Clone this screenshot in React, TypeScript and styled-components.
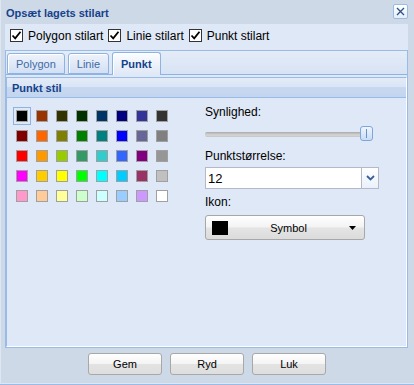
import { useState } from 'react';
import styled, { createGlobalStyle } from 'styled-components';

const GlobalStyle = createGlobalStyle`
  html, body {
    margin: 0;
    padding: 0;
    background: #ffffff;
  }
  body {
    font-family: "Liberation Sans", Arial, sans-serif;
  }
`;

const PALETTE = [
  ['000000', '993300', '333300', '003300', '003366', '000080', '333399', '333333'],
  ['800000', 'FF6600', '808000', '008000', '008080', '0000FF', '666699', '808080'],
  ['FF0000', 'FF9900', '99CC00', '339966', '33CCCC', '3366FF', '800080', '969696'],
  ['FF00FF', 'FFCC00', 'FFFF00', '00FF00', '00FFFF', '00CCFF', '993366', 'C0C0C0'],
  ['FF99CC', 'FFCC99', 'FFFF99', 'CCFFCC', 'CCFFFF', '99CCFF', 'CC99FF', 'FFFFFF'],
];

const TABS = ['Polygon', 'Linie', 'Punkt'];

const Window = styled.div`
  width: 414px;
  height: 385px;
  box-sizing: border-box;
  display: flex;
  flex-direction: column;
  background: #ced9e7;
  border-bottom: 1px solid #99bbe8;
  box-shadow: inset 1px 0 0 #dde6f2, inset 0 -1px 0 #dde6f2;
`;

const Header = styled.div`
  height: 24px;
  flex: none;
  display: flex;
  align-items: center;
  justify-content: space-between;
  padding: 0 6px 0 6px;
`;

const Title = styled.span`
  font-size: 11px;
  font-weight: bold;
  color: #15428b;
  margin-top: 1px;
`;

const CloseButton = styled.div`
  width: 15px;
  height: 15px;
  box-sizing: border-box;
  border: 1px solid #99bbe8;
  border-radius: 2px;
  background: linear-gradient(#ffffff, #e6eefa);
  display: flex;
  align-items: center;
  justify-content: center;
  margin-top: -2px;
`;

const Body = styled.div`
  margin: 0 6px 0 5px;
  background: #dfe8f6;
  display: flex;
  flex-direction: column;
`;

const CheckRow = styled.div`
  height: 26px;
  display: flex;
  align-items: center;
  padding: 0 0 3px 5px;
  box-sizing: border-box;
`;

const CheckItem = styled.label`
  display: flex;
  align-items: center;
  margin-right: 5px;
  font-size: 12px;
  color: #000;
`;

const CheckBox = styled.span`
  width: 13px;
  height: 13px;
  box-sizing: border-box;
  border: 1px solid #333;
  background: #fff;
  margin-right: 5px;
  display: flex;
  align-items: center;
  justify-content: center;
`;

const TabPanel = styled.div`
  height: 298px;
  box-sizing: border-box;
  border: 1px solid #99bbe8;
  display: flex;
  flex-direction: column;
`;

const TabStrip = styled.div`
  height: 24px;
  box-sizing: border-box;
  flex: none;
  display: flex;
  align-items: flex-end;
  gap: 3px;
  padding-left: 1px;
  background: linear-gradient(#e4ecf7, #d7e3f4);
  border-bottom: 1px solid #8db2e3;
`;

const Tab = styled.div<{ $active?: boolean }>`
  height: ${(p) => (p.$active ? '23px' : '21px')};
  margin-bottom: ${(p) => (p.$active ? '-1px' : '0')};
  box-sizing: border-box;
  padding: 0 8px;
  display: flex;
  align-items: center;
  border: 1px solid #8db2e3;
  border-bottom: ${(p) => (p.$active ? 'none' : '1px solid #8db2e3')};
  border-radius: 3px 3px 0 0;
  font-size: 11px;
  font-weight: ${(p) => (p.$active ? 'bold' : 'normal')};
  color: ${(p) => (p.$active ? '#15428b' : '#416aa3')};
  background: ${(p) =>
    p.$active ? 'linear-gradient(#fbfdff, #dfe8f6)' : 'linear-gradient(#eef3fb, #d2e0f4)'};
  box-shadow: inset 1px 1px 0 #ffffff;
  cursor: pointer;
`;

const TabBody = styled.div`
  flex: 1;
  padding-top: 2px;
  display: flex;
  flex-direction: column;
`;

const InnerPanel = styled.div`
  flex: 1;
  display: flex;
  flex-direction: column;
  border: 1px solid #99bbe8;
  border-right-color: #ffffff;
  border-bottom-color: #ffffff;
`;

const PanelHeader = styled.div`
  height: 20px;
  flex: none;
  box-sizing: border-box;
  display: flex;
  align-items: center;
  padding-left: 5px;
  font-size: 11px;
  font-weight: bold;
  color: #15428b;
  background: linear-gradient(#e3ebf7 0%, #dae5f5 45%, #c8d8f0 50%, #c3d5ef 100%);
  border-bottom: 1px solid #99bbe8;
`;

const PanelContent = styled.div`
  flex: 1;
  display: flex;
  gap: 34px;
  padding: 9px 0 0 6px;
`;

const Palette = styled.div`
  display: grid;
  grid-template-columns: repeat(8, 18px);
  grid-auto-rows: 18px;
  gap: 2px;
  align-self: flex-start;
`;

const Cell = styled.div<{ $selected?: boolean }>`
  box-sizing: border-box;
  padding: 2px;
  border: 1px solid ${(p) => (p.$selected ? '#8db2e3' : 'transparent')};
  cursor: pointer;
`;

const Swatch = styled.div`
  width: 12px;
  height: 12px;
  box-sizing: border-box;
  border: 1px solid #a0a0a0;
`;

const Column = styled.div`
  display: flex;
  flex-direction: column;
  margin-top: -2px;
`;

const Label = styled.div<{ $gap?: number }>`
  font-size: 12px;
  line-height: 14px;
  color: #000;
  margin-top: ${(p) => p.$gap ?? 0}px;
`;

const Slider = styled.div`
  width: 168px;
  height: 16px;
  margin-top: 7px;
  position: relative;
  display: flex;
  align-items: center;
`;

const Track = styled.div`
  width: 100%;
  height: 5px;
  border-radius: 2px;
  background: linear-gradient(#a9a9a9, #d6d6d6 60%, #c4c4c4);
`;

const Thumb = styled.div`
  position: absolute;
  right: 0;
  top: 0;
  width: 13px;
  height: 15px;
  box-sizing: border-box;
  border: 1px solid #7ea6d8;
  border-radius: 3px;
  background: linear-gradient(#eef5fd, #c8dcf5);
  display: flex;
  justify-content: center;
  &::after {
    content: '';
    width: 1px;
    margin: 2px 0;
    background: #6a92c4;
  }
`;

const Combo = styled.div`
  width: 174px;
  height: 22px;
  margin-top: 4px;
  box-sizing: border-box;
  display: flex;
  border: 1px solid #b5b8c8;
  background: #fff;
`;

const ComboText = styled.div`
  flex: 1;
  display: flex;
  align-items: center;
  padding-left: 2px;
  font-size: 13px;
  color: #000;
`;

const Trigger = styled.div`
  width: 16px;
  border-left: 1px solid #b5b8c8;
  background: linear-gradient(#ffffff, #eaf1fb);
  display: flex;
  align-items: center;
  justify-content: center;
`;

const IconButton = styled.div`
  width: 160px;
  height: 25px;
  margin-top: 6px;
  box-sizing: border-box;
  display: flex;
  align-items: center;
  padding: 0 8px 0 6px;
  border: 1px solid #a7a7a7;
  border-radius: 3px;
  background: linear-gradient(#ffffff 0%, #f3f3f3 48%, #e4e4e4 52%, #dcdcdc 100%);
  font-size: 11px;
  color: #000;
`;

const IconSquare = styled.span`
  width: 16px;
  height: 14px;
  background: #000;
  flex: none;
`;

const IconText = styled.span`
  flex: 1;
  text-align: center;
`;

const Footer = styled.div`
  flex: 1;
  display: flex;
  justify-content: center;
  align-items: flex-start;
  gap: 8px;
  padding-top: 5px;
`;

const Button = styled.button`
  width: 74px;
  height: 22px;
  box-sizing: border-box;
  border: 1px solid #a8a8a8;
  border-radius: 3px;
  background: linear-gradient(#ffffff 0%, #f4f4f4 48%, #e3e3e3 52%, #dedede 100%);
  font-family: "Liberation Sans", Arial, sans-serif;
  font-size: 11px;
  color: #000;
  padding: 0;
  cursor: pointer;
`;

const Check = () => (
  <svg width="11" height="11" viewBox="0 0 11 11">
    <path d="M1.5 5.5 L4.2 8.3 L9.5 1.8" fill="none" stroke="#000" strokeWidth="1.8" />
  </svg>
);

export default function App() {
  const [tab, setTab] = useState('Punkt');
  const [color, setColor] = useState('000000');

  return (
    <>
      <GlobalStyle />
      <Window>
        <Header>
          <Title>Opsæt lagets stilart</Title>
          <CloseButton>
            <svg width="9" height="9" viewBox="0 0 9 9">
              <path d="M1 1 L8 8 M8 1 L1 8" stroke="#2d4f86" strokeWidth="1.3" />
            </svg>
          </CloseButton>
        </Header>
        <Body>
          <CheckRow>
            {['Polygon stilart', 'Linie stilart', 'Punkt stilart'].map((t) => (
              <CheckItem key={t}>
                <CheckBox>
                  <Check />
                </CheckBox>
                {t}
              </CheckItem>
            ))}
          </CheckRow>
          <TabPanel>
            <TabStrip>
              {TABS.map((t) => (
                <Tab key={t} $active={t === tab} onClick={() => setTab(t)}>
                  {t}
                </Tab>
              ))}
            </TabStrip>
            <TabBody>
              <InnerPanel>
                <PanelHeader>Punkt stil</PanelHeader>
                <PanelContent>
                  <Palette>
                    {PALETTE.flat().map((c) => (
                      <Cell key={c} $selected={c === color} onClick={() => setColor(c)}>
                        <Swatch style={{ background: `#${c}` }} />
                      </Cell>
                    ))}
                  </Palette>
                  <Column>
                    <Label>Synlighed:</Label>
                    <Slider>
                      <Track />
                      <Thumb />
                    </Slider>
                    <Label $gap={7}>Punktstørrelse:</Label>
                    <Combo>
                      <ComboText>12</ComboText>
                      <Trigger>
                        <svg width="9" height="6" viewBox="0 0 9 6">
                          <path d="M1 1 L4.5 4.5 L8 1" fill="none" stroke="#3b5f99" strokeWidth="1.8" />
                        </svg>
                      </Trigger>
                    </Combo>
                    <Label $gap={6}>Ikon:</Label>
                    <IconButton>
                      <IconSquare style={{ background: `#${color}` }} />
                      <IconText>Symbol</IconText>
                      <svg width="7" height="4" viewBox="0 0 7 4">
                        <path d="M0 0 L7 0 L3.5 4 Z" fill="#000" />
                      </svg>
                    </IconButton>
                  </Column>
                </PanelContent>
              </InnerPanel>
            </TabBody>
          </TabPanel>
        </Body>
        <Footer>
          <Button>Gem</Button>
          <Button>Ryd</Button>
          <Button>Luk</Button>
        </Footer>
      </Window>
    </>
  );
}
